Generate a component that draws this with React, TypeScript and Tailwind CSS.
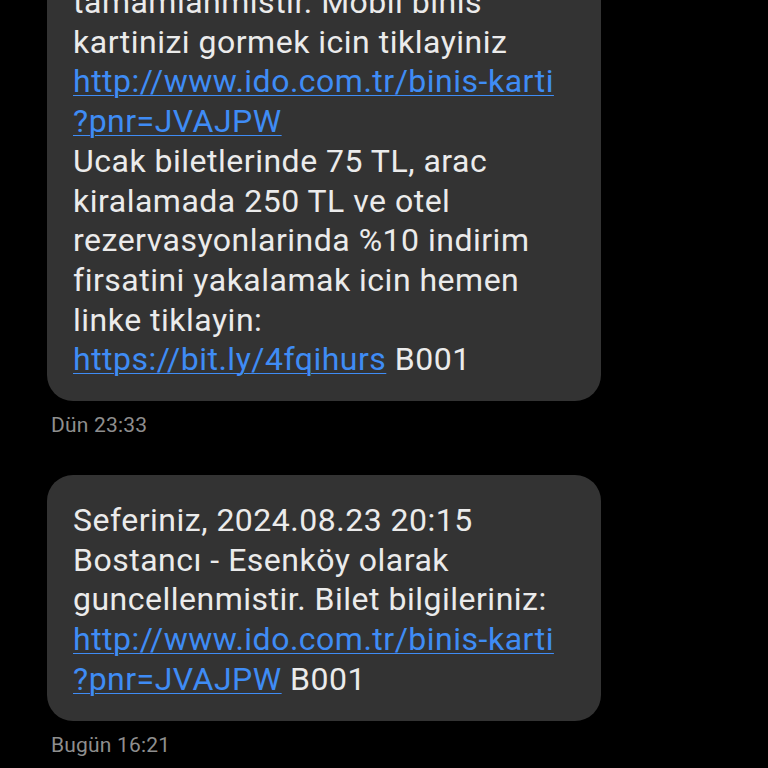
import React from "react";

const font = { fontFamily: "Roboto, 'Noto Sans', sans-serif" };

function Link({ children }: { children: React.ReactNode }) {
  return <span className="text-[#3f8cf5] underline decoration-1 underline-offset-[3px]">{children}</span>;
}

export default function App() {
  return (
    <div className="w-[768px] h-[768px] bg-black overflow-hidden" style={font}>
      <div className="flex flex-col items-start pl-[47px] mt-[-43px]">
        <div className="w-[554px] bg-[#333333] rounded-[26px] pl-[26px] pr-2 pt-[26px] pb-[21px] text-[32px] leading-[39.7px] text-[#ebebeb] tracking-[0.5px]">
          <div>tamamlanmistir. Mobil binis</div>
          <div>kartinizi gormek icin tiklayiniz</div>
          <div><Link>http://www.ido.com.tr/binis-karti</Link></div>
          <div><Link>?pnr=JVAJPW</Link></div>
          <div>Ucak biletlerinde 75 TL, arac</div>
          <div>kiralamada 250 TL ve otel</div>
          <div>rezervasyonlarinda %10 indirim</div>
          <div>firsatini yakalamak icin hemen</div>
          <div>linke tiklayin:</div>
          <div><Link>https://bit.ly/4fqihurs</Link> B001</div>
        </div>
        <div className="mt-[12px] ml-[4px] text-[21px] leading-[24px] text-[#8e8e8e] tracking-[0.2px]">Dün 23:33</div>
        <div className="mt-[38px] w-[554px] bg-[#333333] rounded-[26px] pl-[26px] pr-2 pt-[26px] pb-[21px] text-[32px] leading-[39.7px] text-[#ebebeb] tracking-[0.5px]">
          <div>Seferiniz, 2024.08.23 20:15</div>
          <div>Bostancı - Esenköy olarak</div>
          <div>guncellenmistir. Bilet bilgileriniz:</div>
          <div><Link>http://www.ido.com.tr/binis-karti</Link></div>
          <div><Link>?pnr=JVAJPW</Link> B001</div>
        </div>
        <div className="mt-[12px] ml-[4px] text-[21px] leading-[24px] text-[#8e8e8e] tracking-[0.2px]">Bugün 16:21</div>
      </div>
    </div>
  );
}
